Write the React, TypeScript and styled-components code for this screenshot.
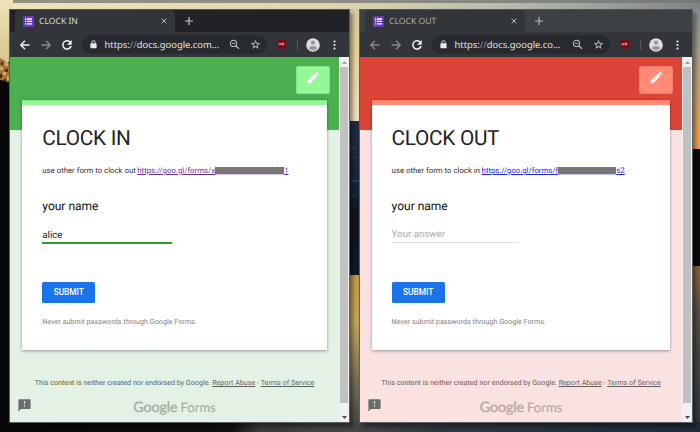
import React from "react";
import styled, { createGlobalStyle } from "styled-components";

const Global = createGlobalStyle`
  *, *::before, *::after { box-sizing: border-box; }
  html, body { margin: 0; padding: 0; overflow: hidden; }
  body { text-rendering: geometricPrecision; }
  svg { display: block; }
`;

interface Palette {
  header: string;
  accent: string;
  accentTop: string;
  page: string;
  link: string;
  underline: string;
  footerInk: string;
  logoInk: string;
}

const green: Palette = {
  header: "#4caf50",
  accent: "#96f796",
  accentTop: "#84e785",
  page: "#e3f2e4",
  link: "#67319f",
  underline: "#24a12a",
  footerInk: "#59625a",
  logoInk: "#a4afa6",
};

const red: Palette = {
  header: "#db4437",
  accent: "#ff8b77",
  accentTop: "#f87b69",
  page: "#fae2e0",
  link: "#2222ee",
  underline: "#e0e0e0",
  footerInk: "#685a5a",
  logoInk: "#b9a7a6",
};

const Desktop = styled.main`
  position: relative;
  width: 700px;
  height: 432px;
  padding: 9px 7px 9px 9px;
  display: flex;
  justify-content: space-between;
  overflow: hidden;
  background: #080808;
`;

const WallpaperArt = styled.svg`
  position: absolute;
  inset: 0;
`;

const BrowserWindow = styled.section<{ $width: number; $strip: string }>`
  position: relative;
  width: ${(p) => p.$width}px;
  height: 414px;
  border: 1px solid #5a5f60;
  border-top-color: #505457;
  display: flex;
  flex-direction: column;
  background: ${(p) => p.$strip};
  box-shadow: 3px 4px 4px rgba(0, 0, 0, 0.4);
`;

const TabStrip = styled.div`
  height: 22px;
  flex: none;
  display: flex;
  align-items: stretch;
  padding-left: 5px;
`;

const Tab = styled.div<{ $ink: string }>`
  width: 160px;
  height: 22px;
  padding: 0 8px 0 8px;
  border-radius: 5px 5px 0 0;
  background: #32363a;
  color: ${(p) => p.$ink};
  display: flex;
  align-items: center;
  font: 8.6px/12px "Noto Sans", sans-serif;
`;

const TabTitle = styled.span`
  flex: 1;
  margin-left: 5px;
  white-space: nowrap;
`;

const NewTab = styled.div<{ $ink: string }>`
  width: 28px;
  color: ${(p) => p.$ink};
  display: grid;
  place-items: center;
`;

const Toolbar = styled.div`
  height: 25px;
  flex: none;
  background: #32363a;
  display: flex;
  align-items: center;
  color: #f1f3f4;
  padding: 0 13px 0 9px;
`;

const NavButtons = styled.div`
  display: flex;
  gap: 9px;
  margin-right: 9px;
`;

const NavIcon = styled.span<{ $dim?: boolean }>`
  width: 12px;
  height: 12px;
  color: ${(p) => (p.$dim ? "#86898b" : "#f1f3f4")};
`;

const AddressBar = styled.div`
  flex: 1;
  height: 19px;
  border-radius: 10px;
  background: #272a2e;
  padding: 0 6px 0 8px;
  display: flex;
  align-items: center;
`;

const UrlText = styled.span`
  flex: 1;
  margin-left: 7.5px;
  white-space: nowrap;
  font: 9.4px/14px "Noto Sans", sans-serif;
  color: #e2e4e6;
`;

const UrlSlashes = styled.span`
  color: #8f9294;
`;

const BarIcons = styled.div`
  display: flex;
  gap: 10px;
  color: #b9bcbe;
`;

const Extensions = styled.div`
  display: flex;
  align-items: center;
  margin-left: 10px;
`;

const Divider = styled.span`
  width: 1px;
  height: 10px;
  margin: 0 8px 0 10px;
  background: #54585b;
`;

const MenuDots = styled.span`
  margin-left: 13px;
`;

const Viewport = styled.div`
  flex: 1;
  min-height: 0;
  display: flex;
`;

const Page = styled.div<{ $p: Palette }>`
  flex: 1;
  display: flex;
  flex-direction: column;
  font-family: Roboto, sans-serif;
  background: linear-gradient(
    ${(p) => p.$p.header} 73px,
    ${(p) => p.$p.page} 73px
  );
`;

const EditRow = styled.div`
  height: 43px;
  padding: 9px 9px 0 0;
  display: flex;
  justify-content: flex-end;
`;

const EditButton = styled.button<{ $p: Palette }>`
  width: 34px;
  height: 28px;
  padding: 0 0 5px;
  border: 1px solid ${(p) => p.$p.accentTop};
  border-radius: 2px;
  background: ${(p) => p.$p.accent};
  display: grid;
  place-items: center;
`;

const FormCard = styled.form<{ $p: Palette; $inset: number }>`
  height: 250px;
  margin: 0 12px;
  padding: 0 ${(p) => p.$inset}px;
  background: linear-gradient(
    ${(p) => p.$p.accentTop} 1px,
    ${(p) => p.$p.accent} 1px 5px,
    #fff 5px
  );
  box-shadow: 0 1px 3px rgba(0, 0, 0, 0.38);
  display: flex;
  flex-direction: column;
  align-items: flex-start;
`;

const Title = styled.h1`
  margin: 26px 0 0;
  font-size: 20.8px;
  line-height: 26px;
  font-weight: 400;
  letter-spacing: -0.3px;
  color: #222;
  white-space: nowrap;
`;

const Description = styled.p`
  margin: 12px 0 0;
  height: 13px;
  display: flex;
  font-size: 7.8px;
  line-height: 13px;
  color: #333;
  white-space: nowrap;
`;

const IntroText = styled.span<{ $width: number }>`
  width: ${(p) => p.$width}px;
`;

const FormLink = styled.a<{ $p: Palette }>`
  display: flex;
  align-items: center;
  height: 13px;
  color: ${(p) => p.$p.link};
  text-decoration: underline;
  text-decoration-thickness: 1px;
`;

const Redaction = styled.span<{ $width: number; $p: Palette }>`
  width: ${(p) => p.$width}px;
  height: 7px;
  background: #777;
  box-shadow: 0 1px 0 ${(p) => p.$p.link}44;
`;

const FieldLabel = styled.label`
  margin-top: 21px;
  font-size: 12px;
  line-height: 17px;
  color: #111;
`;

const Answer = styled.div<{ $width: number; $line: string; $filled: boolean }>`
  width: ${(p) => p.$width}px;
  height: ${(p) => (p.$filled ? 17 : 16)}px;
  margin-top: 12px;
  margin-bottom: ${(p) => (p.$filled ? 38 : 39)}px;
  padding-top: ${(p) => (p.$filled ? 2 : 1)}px;
  border-bottom: ${(p) => (p.$filled ? 2 : 1)}px solid ${(p) => p.$line};
  font-size: 9.7px;
  line-height: 13px;
  color: ${(p) => (p.$filled ? "#222" : "#aaa")};
`;

const Submit = styled.button`
  width: 53px;
  height: 21px;
  margin: 0;
  padding: 0;
  border: 0;
  border-radius: 1.5px;
  background: #1a73e8;
  color: #fff;
  font: 500 8.3px/21px Roboto, sans-serif;
  text-align: center;
`;

const Warning = styled.p`
  margin: 12px 0 0;
  font-size: 7.2px;
  line-height: 13px;
  color: #808080;
  white-space: nowrap;
`;

const Legal = styled.p<{ $p: Palette }>`
  margin: 26px 0 0;
  font-size: 7.16px;
  line-height: 13px;
  text-align: center;
  white-space: nowrap;
  color: ${(p) => p.$p.footerInk};
  & a {
    color: inherit;
    text-decoration: underline;
    text-decoration-thickness: 1px;
  }
`;

const BrandRow = styled.footer<{ $p: Palette }>`
  flex: 1;
  display: grid;
  grid-template-columns: 20px 1fr 20px;
  align-items: start;
  padding: 8px 0 0;
  color: ${(p) => p.$p.logoInk};
`;

const Feedback = styled.span`
  padding: 2px 0 0 8px;
`;

const Brand = styled.div`
  display: flex;
  justify-content: center;
  align-items: baseline;
  gap: 3px;
  height: 19px;
  padding-top: 1px;
  line-height: 18px;
  white-space: nowrap;
`;

const BrandGoogle = styled.span`
  font: 400 14.3px/18px Lato, sans-serif;
  -webkit-text-stroke: 0.35px currentColor;
  letter-spacing: -0.1px;
`;

const BrandForms = styled.span`
  font: 400 13px/18px Lato, sans-serif;
  -webkit-text-stroke: 0.15px currentColor;
`;

const Scrollbar = styled.div`
  width: 10px;
  flex: none;
  background: #f1f1f1;
  display: flex;
  flex-direction: column;
  align-items: center;
`;

const ScrollArrow = styled.span<{ $down?: boolean }>`
  height: ${(p) => (p.$down ? 19 : 10)}px;
  padding-top: ${(p) => (p.$down ? 13 : 4)}px;
`;

const ScrollThumb = styled.div`
  width: 8px;
  flex: 1;
  background: #c1c1c1;
`;

const Wallpaper = () => (
  <WallpaperArt width="700" height="432" viewBox="0 0 700 432" aria-hidden="true">
    <defs>
      <linearGradient id="topGlow">
        <stop offset="0" stopColor="#f0e4b9" />
        <stop offset=".5" stopColor="#dcd2b2" />
        <stop offset=".75" stopColor="#b3b7aa" />
        <stop offset="1" stopColor="#7c8689" />
      </linearGradient>
      <linearGradient id="leftSky" x2="0" y2="1">
        <stop offset="0" stopColor="#efe3bb" />
        <stop offset="1" stopColor="#d9c58e" />
      </linearGradient>
      <linearGradient id="middleSky" x2="0" y2="1">
        <stop offset="0" stopColor="#d2c9a7" />
        <stop offset=".3" stopColor="#e5d397" />
        <stop offset="1" stopColor="#f3dfbd" />
      </linearGradient>
      <linearGradient id="city" x2="0" y2="1">
        <stop offset="0" stopColor="#222d40" />
        <stop offset=".45" stopColor="#152638" />
        <stop offset=".6" stopColor="#10161e" />
        <stop offset="1" stopColor="#101a2b" />
      </linearGradient>
      <linearGradient id="water" x2="0" y2="1">
        <stop offset="0" stopColor="#c59a46" />
        <stop offset=".3" stopColor="#c5a75b" />
        <stop offset=".7" stopColor="#706b55" />
        <stop offset="1" stopColor="#3d423f" />
      </linearGradient>
      <linearGradient id="rightSky" x2="0" y2="1">
        <stop offset="0" stopColor="#858e91" />
        <stop offset=".4" stopColor="#b5a383" />
        <stop offset="1" stopColor="#f4a04c" />
      </linearGradient>
      <linearGradient id="rightWater" x2="0" y2="1">
        <stop offset="0" stopColor="#8d643a" />
        <stop offset=".3" stopColor="#574e43" />
        <stop offset="1" stopColor="#293542" />
      </linearGradient>
      <linearGradient id="shore">
        <stop offset="0" stopColor="#080808" />
        <stop offset=".33" stopColor="#110f10" />
        <stop offset=".37" stopColor="#3d3a3a" />
        <stop offset=".5" stopColor="#454747" />
        <stop offset=".62" stopColor="#303941" />
        <stop offset="1" stopColor="#202b38" />
      </linearGradient>
    </defs>
    <rect width="700" height="12" fill="url(#topGlow)" />
    <rect x="13" width="687" height="3" fill="#727570" opacity=".75" />
    <rect width="12" height="62" fill="url(#leftSky)" />
    <path d="M0 58l4 2 3 3 5-1v20H0z" fill="#a57336" />
    <path d="M0 67h3v3H0zM5 62h3v4H5zM3 72h3v3H3zM7 76h3v4H7z" fill="#e5a35a" />
    <path d="M1 62h2v3H1zM5 69h3v3H5zM0 74h2v4H0zM4 79h2v3H4z" fill="#3b2d17" />
    <path d="M0 80l6 1 2 6 4 2v343H0z" fill="#070707" />
    <rect x="346" y="9" width="16" height="113" fill="url(#middleSky)" />
    <rect x="346" y="121" width="16" height="155" fill="url(#city)" />
    <path d="M350 147h6v2h-6zM353 157h6v1h-6zM350 180h9v2h-9zM352 195h5v1h-5z" fill="#203c5c" />
    <rect x="346" y="275" width="16" height="157" fill="url(#water)" />
    <rect x="690" y="9" width="10" height="141" fill="url(#rightSky)" />
    <rect x="690" y="149" width="10" height="118" fill="#090b0b" />
    <rect x="690" y="266" width="10" height="166" fill="url(#rightWater)" />
    <rect y="422" width="700" height="10" fill="url(#shore)" />
  </WallpaperArt>
);

const FormsIcon = ({ dim }: { dim?: boolean }) => (
  <svg width="11" height="11" viewBox="0 0 11 11">
    <rect width="11" height="11" rx=".8" fill={dim ? "#6739b5" : "#673ab7"} />
    <path d="M2 3h1.3M2 5.4h1.3M2 7.8h1.3M4 3h5M4 5.4h5M4 7.8h5" stroke="#fff" strokeWidth="1.3" />
  </svg>
);

const CloseIcon = () => (
  <svg width="6" height="6" viewBox="0 0 6 6">
    <path d="M.6.6l4.8 4.8M5.4.6L.6 5.4" stroke="#b4b7b9" strokeWidth="1" />
  </svg>
);

const PlusIcon = () => (
  <svg width="8" height="8" viewBox="0 0 8 8">
    <path d="M4 0v8M0 4h8" stroke="currentColor" strokeWidth="1.2" />
  </svg>
);

const ArrowIcon = ({ forward }: { forward?: boolean }) => (
  <svg width="12" height="12" viewBox="0 0 12 12">
    <path
      d="M10.5 6H2M6 1.8L1.8 6 6 10.2"
      transform={forward ? "matrix(-1 0 0 1 12 0)" : undefined}
      fill="none"
      stroke="currentColor"
      strokeWidth="1.35"
    />
  </svg>
);

const ReloadIcon = () => (
  <svg width="12" height="12" viewBox="0 0 12 12">
    <path d="M9.4 3.3A4.2 4.2 0 1 0 10.1 7" fill="none" stroke="currentColor" strokeWidth="1.5" />
    <path d="M10.7 1v4.7H6z" fill="currentColor" />
  </svg>
);

const LockIcon = () => (
  <svg width="7" height="9" viewBox="0 0 7 9">
    <rect x=".4" y="3.3" width="6.2" height="4.9" rx=".6" fill="#e8eaed" />
    <path d="M1.9 3.6V2.2a1.6 1.6 0 0 1 3.2 0v1.4" fill="none" stroke="#e8eaed" strokeWidth=".9" />
  </svg>
);

const ZoomOutIcon = () => (
  <svg width="11" height="11" viewBox="0 0 11 11" fill="none" stroke="currentColor">
    <circle cx="4.5" cy="4.4" r="3.1" strokeWidth="1.1" />
    <path d="M3 4.4h3" strokeWidth=".9" />
    <path d="M6.8 6.7L10 9.9" strokeWidth="1.3" />
  </svg>
);

const StarIcon = () => (
  <svg width="11" height="11" viewBox="0 0 24 24">
    <path
      d="M22 9.24l-7.19-.62L12 2 9.19 8.63 2 9.24l5.46 4.73L5.82 21 12 17.27 18.18 21l-1.63-7.03L22 9.24zM12 15.4l-3.76 2.27 1-4.28-3.32-2.88 4.38-.38L12 6.1l1.71 4.04 4.38.38-3.32 2.88 1 4.28L12 15.4z"
      fill="currentColor"
      stroke="currentColor"
      strokeWidth=".4"
    />
  </svg>
);

const ShieldIcon = () => (
  <svg width="10" height="11" viewBox="0 0 10 11">
    <path d="M5 .2C6.5 1.2 8 1.5 9.6 1.5c.2 4.8-.8 7.3-4.6 9.2C1.2 8.8.2 6.3.4 1.5 2 1.5 3.5 1.2 5 .2z" fill="#800610" />
    <path d="M2.1 4v1.2q0 .9.8.9t.8-.9V4" fill="none" stroke="#ddd" strokeWidth=".7" />
    <path d="M5 4v2h.7q1.5 0 1.5-1t-1.5-1z" fill="none" stroke="#ddd" strokeWidth=".7" />
  </svg>
);

const AvatarIcon = () => (
  <svg width="14" height="14" viewBox="0 0 14 14">
    <circle cx="7" cy="7" r="6.8" fill="#dedede" />
    <circle cx="7" cy="4.7" r="2.1" fill="#999" />
    <path d="M2.8 10.2C3.2 8.5 5 8 7 8s3.8.5 4.2 2.2C10.2 11.6 8.8 12.2 7 12.2s-3.2-.6-4.2-2z" fill="#999" />
  </svg>
);

const DotsIcon = () => (
  <svg width="3" height="10" viewBox="0 0 3 10" fill="#f1f3f4">
    <circle cx="1.5" cy="1.5" r="1.05" />
    <circle cx="1.5" cy="5" r="1.05" />
    <circle cx="1.5" cy="8.5" r="1.05" />
  </svg>
);

const PencilIcon = () => (
  <svg width="15" height="15" viewBox="0 0 24 24" fill="#fff">
    <path d="M3 17.25V21h3.75L17.81 9.94l-3.75-3.75L3 17.25zM20.71 7.04a1 1 0 0 0 0-1.41l-2.34-2.34a1 1 0 0 0-1.41 0l-1.83 1.83 3.75 3.75 1.83-1.83z" />
  </svg>
);

const FeedbackIcon = () => (
  <svg width="13" height="13" viewBox="0 0 13 13">
    <path d="M1.2.3h10.6q.8 0 .8.8v8.2q0 .8-.8.8H3L.4 12.5V1.1q0-.8.8-.8z" fill="#6a6c69" />
    <path d="M6.5 2.1v3.2M6.5 6.6V8" stroke="#d7ddd8" strokeWidth="1.2" />
  </svg>
);

const Triangle = ({ down }: { down?: boolean }) => (
  <svg width="5" height="3" viewBox="0 0 5 3">
    <path d={down ? "M0 0h5L2.5 3z" : "M0 3h5L2.5 0z"} fill={down ? "#4d4d4d" : "#a3a3a3"} />
  </svg>
);

interface FormWindowProps {
  title: string;
  width: number;
  strip: string;
  focused: boolean;
  palette: Palette;
  inset: number;
  url: string;
  intro: string;
  introWidth: number;
  linkStart: string;
  linkEnd: string;
  redacted: number;
  answer?: string;
  lineWidth: number;
}

const FormWindow = (w: FormWindowProps) => (
  <BrowserWindow $width={w.width} $strip={w.strip}>
    <TabStrip>
      <Tab $ink={w.focused ? "#d7d9da" : "#a9acae"}>
        <FormsIcon dim={!w.focused} />
        <TabTitle>{w.title}</TabTitle>
        <CloseIcon />
      </Tab>
      <NewTab $ink={w.focused ? "#c6c8ca" : "#b6b8ba"}>
        <PlusIcon />
      </NewTab>
    </TabStrip>
    <Toolbar>
      <NavButtons>
        <NavIcon $dim={!w.focused}><ArrowIcon /></NavIcon>
        <NavIcon $dim><ArrowIcon forward /></NavIcon>
        <NavIcon><ReloadIcon /></NavIcon>
      </NavButtons>
      <AddressBar>
        <LockIcon />
        <UrlText>
          https:<UrlSlashes>//</UrlSlashes>{w.url}
        </UrlText>
        <BarIcons>
          <ZoomOutIcon />
          <StarIcon />
        </BarIcons>
      </AddressBar>
      <Extensions>
        <ShieldIcon />
        <Divider />
        <AvatarIcon />
        <MenuDots><DotsIcon /></MenuDots>
      </Extensions>
    </Toolbar>
    <Viewport>
      <Page $p={w.palette}>
        <EditRow>
          <EditButton type="button" aria-label="Edit" $p={w.palette}>
            <PencilIcon />
          </EditButton>
        </EditRow>
        <FormCard $p={w.palette} $inset={w.inset}>
          <Title>{w.title}</Title>
          <Description>
            <IntroText $width={w.introWidth}>{w.intro}</IntroText>
            <FormLink $p={w.palette}>
              <span>{w.linkStart}</span>
              <Redaction $width={w.redacted} $p={w.palette} />
              <span>{w.linkEnd}</span>
            </FormLink>
          </Description>
          <FieldLabel>your name</FieldLabel>
          <Answer $width={w.lineWidth} $line={w.palette.underline} $filled={!!w.answer}>
            {w.answer ?? "Your answer"}
          </Answer>
          <Submit type="button">SUBMIT</Submit>
          <Warning>Never submit passwords through Google Forms.</Warning>
        </FormCard>
        <Legal $p={w.palette}>
          This content is neither created nor endorsed by Google. <a>Report Abuse</a> - <a>Terms of Service</a>
        </Legal>
        <BrandRow $p={w.palette}>
          <Feedback><FeedbackIcon /></Feedback>
          <Brand>
            <BrandGoogle>Google</BrandGoogle>
            <BrandForms>Forms</BrandForms>
          </Brand>
        </BrandRow>
      </Page>
      <Scrollbar>
        <ScrollArrow><Triangle /></ScrollArrow>
        <ScrollThumb />
        <ScrollArrow $down><Triangle down /></ScrollArrow>
      </Scrollbar>
    </Viewport>
  </BrowserWindow>
);

export default function App() {
  return (
    <>
      <Global />
      <Desktop>
        <Wallpaper />
        <FormWindow
          title="CLOCK IN"
          width={341}
          strip="#202225"
          focused
          palette={green}
          inset={20.3}
          url="docs.google.com…"
          intro="use other form to clock out"
          introWidth={95}
          linkStart="https://goo.gl/forms/x"
          linkEnd="1"
          redacted={69}
          answer="alice"
          lineWidth={130}
        />
        <FormWindow
          title="CLOCK OUT"
          width={334}
          strip="#3e4144"
          focused={false}
          palette={red}
          inset={19.6}
          url="docs.google.co…"
          intro="use other form to clock in"
          introWidth={90}
          linkStart="https://goo.gl/forms/f"
          linkEnd="s2"
          redacted={58}
          lineWidth={127}
        />
      </Desktop>
    </>
  );
}
